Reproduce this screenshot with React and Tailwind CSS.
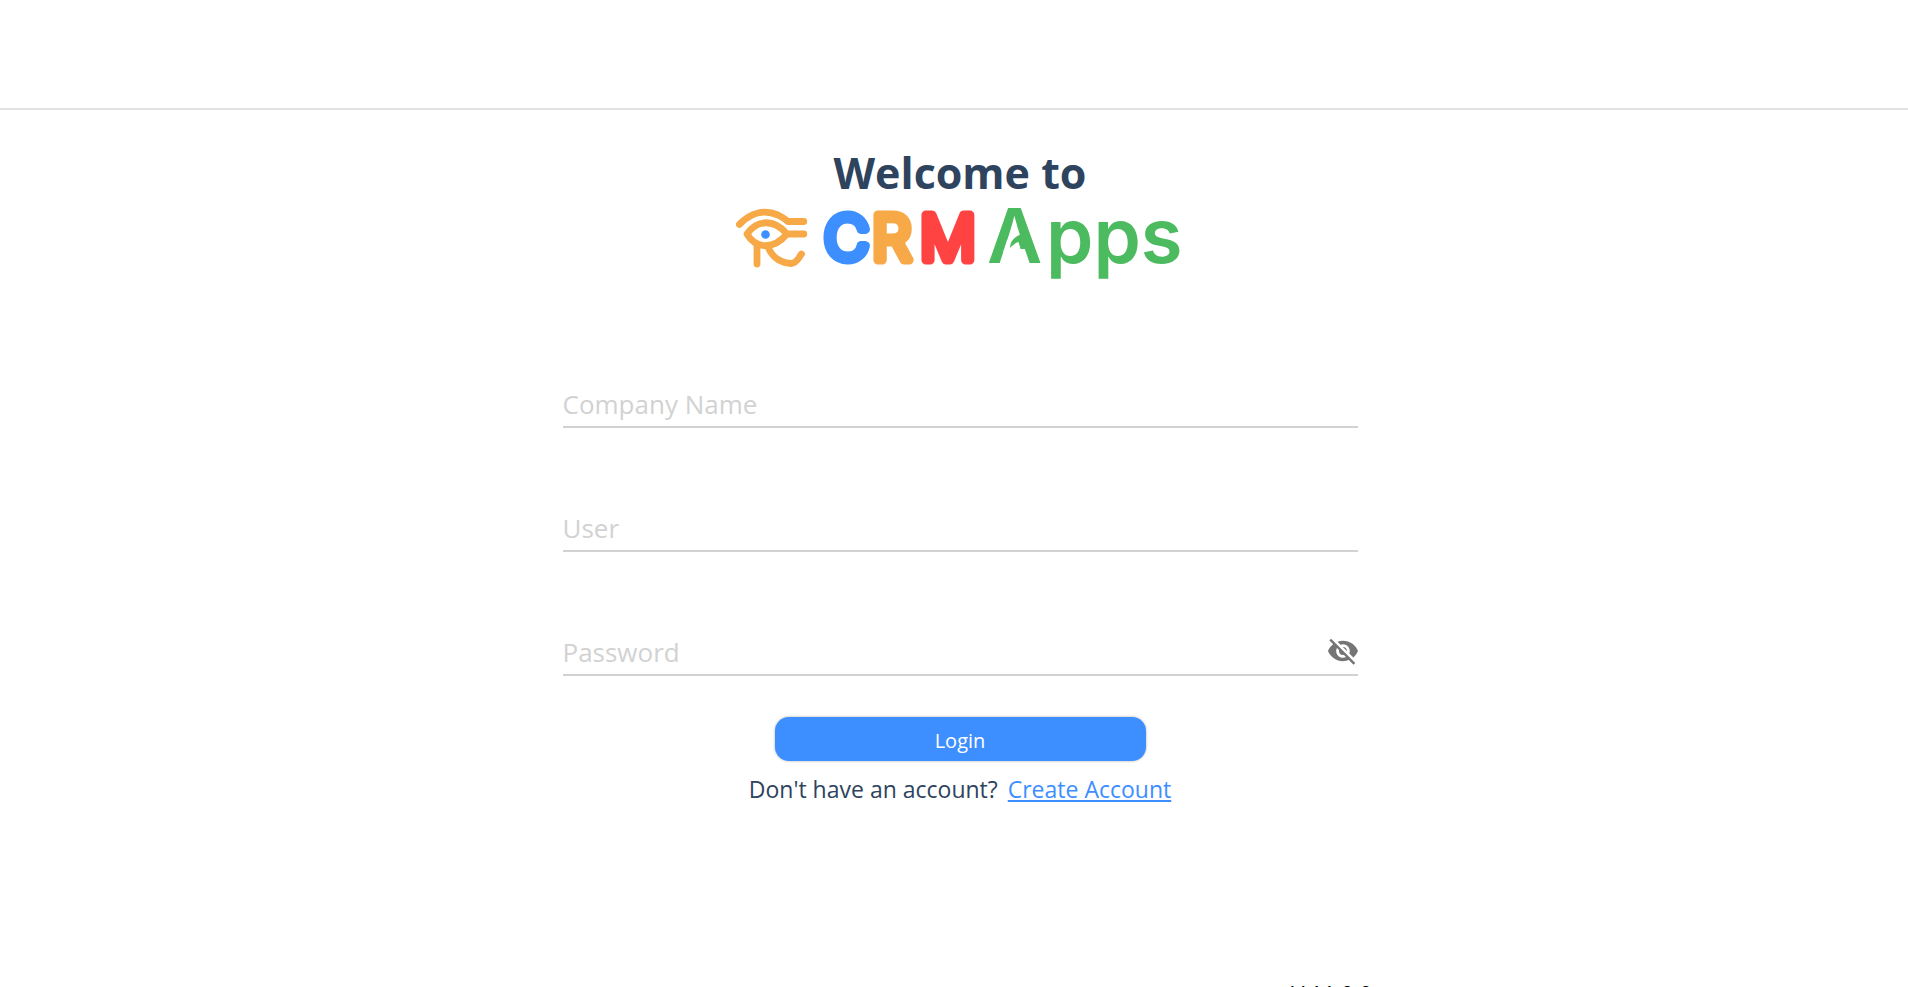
import { useState } from "react";

const FIELDS = [
  { id: "company", label: "Company Name", type: "text" },
  { id: "user", label: "User", type: "text" },
  { id: "password", label: "Password", type: "password" },
];

function Logo() {
  return (
    <svg
      className="block w-[460px] h-[76px] mt-1.5 overflow-visible"
      viewBox="730 206 460 76"
      role="img"
      aria-label="CRM Apps"
    >
      {/* Eye of Horus */}
      <g fill="none" stroke="#f8a947" strokeWidth="6.8" strokeLinecap="round" strokeLinejoin="round">
        <path d="M739.4 224.4 C751 212 765 209.5 778 215 Q783 217.5 788 221.5 H803.8" />
        <path d="M803.8 234 H787 C774 218.500 757 219.500 747 234 C756 249.500 774 249.500 787 234" />
        <path d="M757 246 V264" />
        <path d="M768 247 C773 259 781 263 791 263.5 C797 263.5 799 257 801.5 254" />
      </g>
      <circle cx="765.5" cy="234.5" r="4.3" fill="#3d8eff" />
      <g
        fontSize="62"
        fontWeight="300"
        strokeWidth="9"
        strokeLinejoin="round"
        strokeLinecap="round"
        className="font-['Inter',sans-serif]"
      >
        <text x="824" y="260" fill="#3d8eff" stroke="#3d8eff">C</text>
        <text x="872" y="260" fill="#f8a947" stroke="#f8a947">R</text>
        <text x="920" y="260" fill="#ff4343" stroke="#ff4343">M</text>
      </g>
      <g fontSize="76" fontWeight="600" fill="#4cbb5f" className="font-['Inter',sans-serif]">
        <text x="987" y="263">A</text>
        <text x="1046" y="263">pps</text>
      </g>
      {/* Leaf in place of the crossbar */}
      <path d="M1007 240 H1018 L1021.500 252.500 H1003 Z" fill="#fff" />
      <path d="M1010 248 C1010.500 240 1014 238 1021 234 L1023 241 C1018 241 1014 244 1010 248 Z" fill="#4cbb5f" />
    </svg>
  );
}

export default function App() {
  const [values, setValues] = useState({ company: "", user: "", password: "" });
  const [visible, setVisible] = useState(false);

  const handleChange = (e) => setValues((v) => ({ ...v, [e.target.id]: e.target.value }));

  return (
    <div className="h-screen overflow-hidden bg-white font-['Open_Sans','Noto_Sans',sans-serif] text-[#2e445e]">
      <header className="h-[110px] border-b-2 border-[#e2e2e2]" />

      <main className="flex flex-col items-center pl-3 pt-9">
        <h1 className="text-[43px] leading-[54px] font-bold">Welcome to</h1>
        <Logo />

        <form className="w-full max-w-[795px] flex flex-col items-center pt-[92px]" onSubmit={(e) => e.preventDefault()}>
          {FIELDS.map(({ id, label, type }) => (
            <div
              key={id}
              className="w-full flex items-end h-[54px] pb-1 mb-[70px] last-of-type:mb-[41px] border-b-2 border-[#d2d2d2]"
            >
              <input
                id={id}
                aria-label={label}
                placeholder={label}
                type={type === "password" && visible ? "text" : type}
                value={values[id]}
                onChange={handleChange}
                className="flex-1 min-w-0 text-[26px] leading-9 outline-none placeholder:text-[#d2d2d2]"
              />
              {type === "password" && (
                <button type="button" aria-label="Show password" className="pb-1" onClick={() => setVisible((v) => !v)}>
                  <svg className="w-[30px] h-[30px]" viewBox="1 1 22 22" fill="#757575">
                    <path d="M12 7c2.76 0 5 2.24 5 5 0 .65-.13 1.26-.36 1.83l2.92 2.92c1.51-1.26 2.7-2.89 3.43-4.75-1.73-4.39-6-7.5-11-7.5-1.4 0-2.74.25-3.98.7l2.16 2.16C10.74 7.13 11.35 7 12 7zM2 4.27l2.28 2.28.46.46C3.08 8.3 1.78 10.02 1 12c1.73 4.39 6 7.5 11 7.5 1.55 0 3.03-.3 4.38-.84l.42.42L19.73 22 21 20.73 3.27 3 2 4.27zM7.53 9.8l1.55 1.55c-.05.21-.08.43-.08.65 0 1.66 1.34 3 3 3 .22 0 .44-.03.65-.08l1.55 1.55c-.67.33-1.41.53-2.2.53-2.76 0-5-2.24-5-5 0-.79.2-1.53.53-2.2zm4.31-.78l3.15 3.15.02-.16c0-1.66-1.34-3-3-3l-.17.01z" />
                  </svg>
                </button>
              )}
            </div>
          ))}
          <button
            type="submit"
            className="w-[371px] h-11 pt-1 rounded-[14px] bg-[#3d8eff] text-white text-[20px] leading-6 shadow-[0_0_2px_1px_rgba(0,0,0,0.15)]"
          >
            Login
          </button>
        </form>

        <p className="mt-3 text-[23px] leading-8">
          Don't have an account?{" "}
          <a href="#create" className="ml-1 text-[#3d8eff] underline">
            Create Account
          </a>
        </p>
        <p className="w-full max-w-[824px] mt-[172px] text-right text-[22px] leading-8 text-black">V 11.0.0</p>
      </main>
    </div>
  );
}
